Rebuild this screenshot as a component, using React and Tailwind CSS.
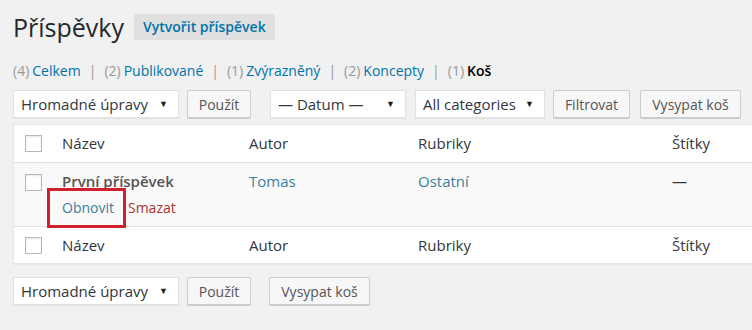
import React from 'react';

const Select = ({ label, className }) => (
  <div className={`h-[28px] bg-white border border-[#e2e2e2] shadow-[0_1px_1px_rgba(0,0,0,0.05)] flex items-center justify-between pl-[7px] pr-[10px] text-[15px] text-[#32373c] ${className}`}>
    <span>{label}</span>
    <span className="text-[9px] text-[#222]">▼</span>
  </div>
);

const Button = ({ label, className }) => (
  <div className={`h-[28px] bg-[#f7f7f7] border border-[#cccccc] rounded-[2px] shadow-[0_1px_0_#ccc] flex items-center justify-center text-[14px] text-[#555] ${className}`}>
    {label}
  </div>
);

const Checkbox = () => (
  <div className="w-[17px] h-[17px] border border-[#b4b9be] bg-white shadow-[inset_0_1px_2px_rgba(0,0,0,0.1)]" />
);

const Row = ({ children, className }) => (
  <div className={`flex ${className}`}>{children}</div>
);

const App = () => {
  return (
    <div className="w-[752px] h-[330px] bg-[#f1f1f1] overflow-hidden text-[#32373c]" style={{ fontFamily: '"Open Sans", sans-serif' }}>
      <div className="pl-[13px]">
        {/* title */}
        <div className="flex items-center gap-[10px] pt-[9px] h-[44px]">
          <h1 className="text-[25px] font-normal text-[#23282d] leading-[32px]">Příspěvky</h1>
          <div className="h-[26px] px-[9px] bg-[#e0e0e0] text-[#0073aa] text-[14px] font-semibold flex items-center rounded-[2px]">Vytvořit příspěvek</div>
        </div>

        {/* status links */}
        <div className="mt-[18px] text-[14px] leading-[18px] flex items-center">
          <span className="text-[#999]">(4)</span><span className="text-[#0073aa] ml-[3px]">Celkem</span>
          <span className="text-[#999] mx-[8px]">|</span>
          <span className="text-[#999]">(2)</span><span className="text-[#0073aa] ml-[3px]">Publikované</span>
          <span className="text-[#999] mx-[8px]">|</span>
          <span className="text-[#999]">(1)</span><span className="text-[#0073aa] ml-[3px]">Zvýrazněný</span>
          <span className="text-[#999] mx-[8px]">|</span>
          <span className="text-[#999]">(2)</span><span className="text-[#0073aa] ml-[3px]">Koncepty</span>
          <span className="text-[#999] mx-[8px]">|</span>
          <span className="text-[#999]">(1)</span><span className="text-black font-semibold ml-[3px]">Koš</span>
        </div>

        {/* top controls */}
        <div className="flex mt-[10px]">
          <Select label="Hromadné úpravy" className="w-[166px]" />
          <Button label="Použít" className="w-[64px] ml-[8px]" />
          <Select label="— Datum —" className="w-[136px] ml-[19px]" />
          <Select label="All categories" className="w-[130px] ml-[9px]" />
          <Button label="Filtrovat" className="w-[77px] ml-[8px]" />
          <Button label="Vysypat koš" className="w-[101px] ml-[10px]" />
        </div>

        {/* table */}
        <div className="mt-[6px] border border-[#e5e5e5] border-r-0 bg-white shadow-[0_1px_1px_rgba(0,0,0,0.04)] text-[15px]">
          <Row className="h-[38px] items-center border-b border-[#e1e1e1]">
            <div className="w-[48px] pl-[11px]"><Checkbox /></div>
            <div className="w-[187px] text-[#32373c]">Název</div>
            <div className="w-[169px]">Autor</div>
            <div className="w-[254px]">Rubriky</div>
            <div>Štítky</div>
          </Row>
          <Row className="h-[64px] bg-[#f9f9f9] border-b border-[#e1e1e1] pt-[8px]">
            <div className="w-[48px] pl-[11px] pt-[3px]"><Checkbox /></div>
            <div className="w-[187px] relative">
              <div className="font-semibold text-[#555] leading-[20px]">První příspěvek</div>
              <div className="mt-[8px] flex text-[14px] leading-[18px]">
                <span className="text-[#3b7f9c]">Obnovit</span>
                <span className="text-[#a33] ml-[14px]">Smazat</span>
              </div>
              <div className="absolute left-[-15px] top-[17px] w-[79px] h-[40px] border-[3px] border-[#d0202c]" />
            </div>
            <div className="w-[169px] text-[#3b7f9c] leading-[20px]">Tomas</div>
            <div className="w-[254px] text-[#3b7f9c] leading-[20px]">Ostatní</div>
            <div className="leading-[20px]">—</div>
          </Row>
          <Row className="h-[36px] items-center">
            <div className="w-[48px] pl-[11px]"><Checkbox /></div>
            <div className="w-[187px]">Název</div>
            <div className="w-[169px]">Autor</div>
            <div className="w-[254px]">Rubriky</div>
            <div>Štítky</div>
          </Row>
        </div>

        {/* bottom controls */}
        <div className="flex mt-[13px]">
          <Select label="Hromadné úpravy" className="w-[166px]" />
          <Button label="Použít" className="w-[64px] ml-[8px]" />
          <Button label="Vysypat koš" className="w-[101px] ml-[18px]" />
        </div>
      </div>
    </div>
  );
};

export default App;
